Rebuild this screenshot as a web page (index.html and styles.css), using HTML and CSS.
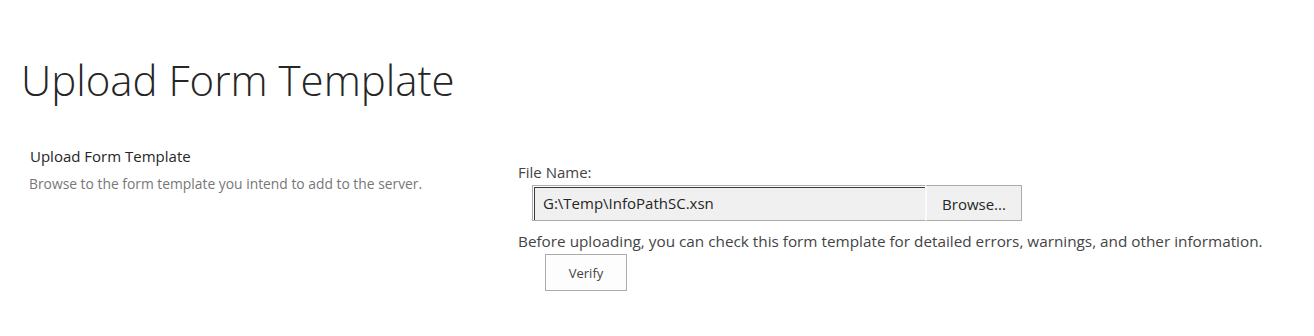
FILE: index.html
```html
<!DOCTYPE html>
<html lang="en">
<head>
    <meta charset="UTF-8">
    <meta name="viewport" content="width=device-width, initial-scale=1.0">
    <title>Upload Form Template</title>
    <link rel="stylesheet" href="styles.css">
</head>
<body>
    <h1 class="page-title">Upload Form Template</h1>

    <div class="section">
        <div class="section-info">
            <h3 class="section-title">Upload Form Template</h3>
            <p class="section-desc">Browse to the form template you intend to add to the server.</p>
        </div>

        <div class="section-body">
            <label class="field-label" for="fileName">File Name:</label>
            <div class="file-row">
                <div class="file-box" id="fileName">G:\Temp\InfoPathSC.xsn</div>
                <button type="button" class="browse-btn">Browse...</button>
            </div>
            <p class="verify-note">Before uploading, you can check this form template for detailed errors, warnings, and other information.</p>
            <button type="button" class="verify-btn">Verify</button>
        </div>
    </div>
</body>
</html>
```

FILE: styles.css
```css
body {
    margin: 0;
    padding: 0;
    font-family: "Open Sans", "Noto Sans", sans-serif;
    color: #444;
    background-color: #fff;
}
.page-title {
    margin: 0;
    padding: 52px 0 0 21px;
    font-size: 42px;
    font-weight: 300;
    line-height: 56px;
    color: #262626;
}
.section {
    display: flex;
    padding-top: 38px;
}
.section-info {
    width: 488px;
    padding-left: 30px;
}
.section-title {
    margin: 0;
    font-size: 15px;
    font-weight: 400;
    line-height: 20px;
    color: #262626;
}
.section-desc {
    margin: 9px 0 0 -1px;
    font-size: 13.85px;
    line-height: 18px;
    color: #777;
}
.section-body {
    padding-top: 16px;
}
.field-label {
    display: block;
    font-size: 15px;
    line-height: 20px;
    color: #444;
}
.file-row {
    display: flex;
    margin: 3px 0 0 14px;
}
.file-box {
    width: 382px;
    height: 34px;
    border: 1px solid #ababab;
    border-right: none;
    box-shadow: inset 1px 1px 0 #fff, inset 2px 2px 0 #3a3a3a;
    background-color: #f0f0f0;
    padding-left: 10px;
    font-size: 15px;
    line-height: 35px;
    color: #262626;
}
.browse-btn {
    width: 97px;
    height: 36px;
    border: 1px solid #ababab;
    border-left: 2px solid #fafafa;
    background-color: #f0f0f0;
    font-family: inherit;
    font-size: 15px;
    color: #262626;
    padding: 2px 0 0;
}
.verify-note {
    margin: 10px 0 0;
    font-size: 15.3px;
    line-height: 20px;
    color: #444;
}
.verify-btn {
    display: block;
    margin: 3px 0 0 27px;
    width: 82px;
    height: 37px;
    border: 1px solid #ababab;
    background-color: #fdfdfd;
    font-family: inherit;
    font-size: 13px;
    color: #444;
}
```
